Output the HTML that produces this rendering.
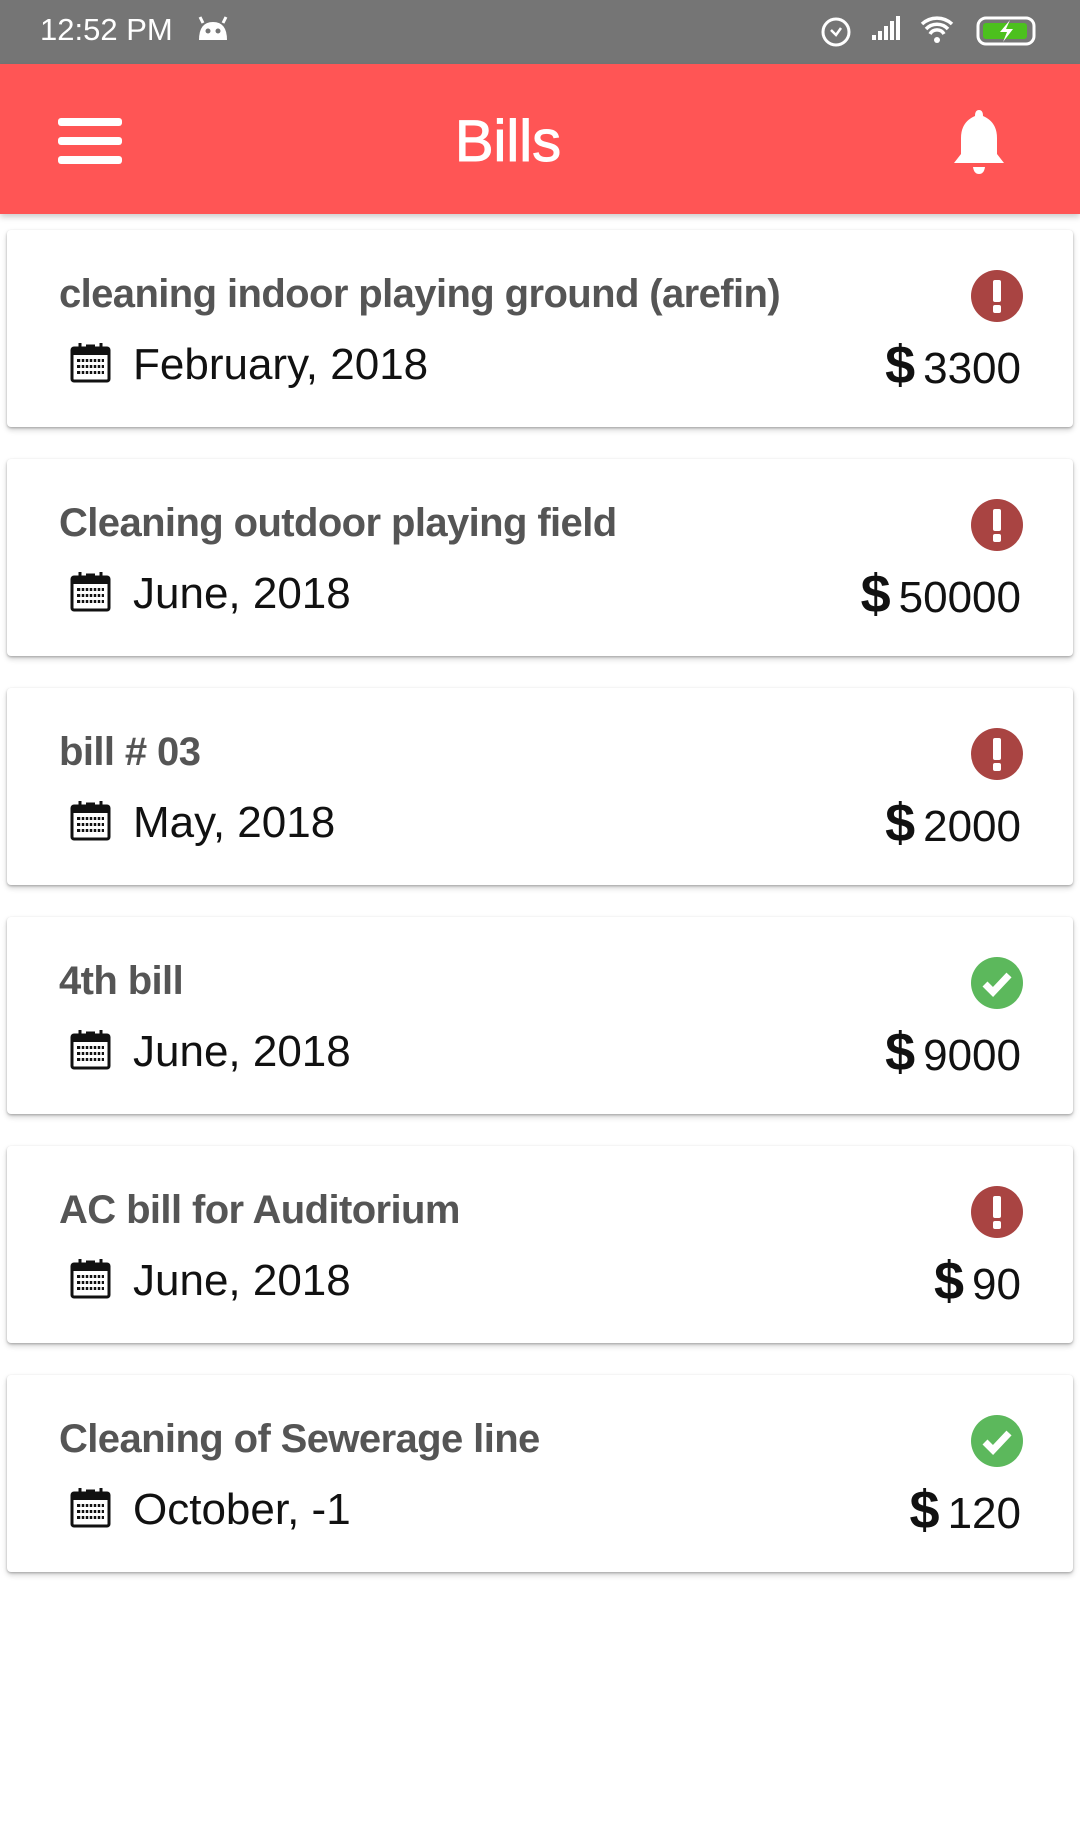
<!DOCTYPE html>
<html><head><meta charset="utf-8"><style>
*{margin:0;padding:0;box-sizing:border-box}
body{width:1080px;height:1840px;background:#fff;font-family:"Liberation Sans",sans-serif;position:relative;overflow:hidden}
.sb{position:absolute;left:0;top:0;width:1080px;height:64px;background:#757575;color:#fff}
.sb .t{position:absolute;left:40px;top:12px;font-size:31px}
.tb{position:absolute;left:0;top:64px;width:1080px;height:150px;background:#FF5555;box-shadow:0 3px 6px rgba(0,0,0,.2)}
.tb .h{position:absolute;left:508px;top:44px;width:0;text-align:center}
.tb .h span{position:absolute;left:-100px;width:200px;color:#fff;font-size:58px;text-align:center;-webkit-text-stroke:1px #fff}
.card{position:absolute;left:7px;width:1066px;height:197px;background:#fff;border-radius:4px;box-shadow:0 1px 2px rgba(0,0,0,.25),0 3px 6px rgba(0,0,0,.18)}
.ti{position:absolute;left:52px;top:42px;font-size:40px;font-weight:bold;color:#555;letter-spacing:-0.6px}
.cal{position:absolute;left:63px;top:112px}
.dt{position:absolute;left:126px;top:110px;font-size:44px;color:#111}
.amt{position:absolute;right:52px;top:104px;font-size:44px;color:#111;white-space:nowrap}
.amt b{font-size:54px;margin-right:8px}
.ic{position:absolute;left:964px;top:40px}
</style></head><body>
<div class="sb"><span class="t">12:52 PM</span>
<svg style="position:absolute;left:196px;top:14px" width="34" height="28" viewBox="0 0 34 28"><path d="M3 26 Q3 8 17 8 Q31 8 31 26Z" fill="#fff"/><path d="M7 9 L4 3 M27 9 L30 3" stroke="#fff" stroke-width="3"/><circle cx="12" cy="17" r="2.5" fill="#757575"/><circle cx="22" cy="17" r="2.5" fill="#757575"/></svg>
<svg style="position:absolute;left:818px;top:10px" width="226" height="40" viewBox="0 0 226 40"><circle cx="18" cy="22" r="13" fill="none" stroke="#fff" stroke-width="3"/><path d="M13 20 l5 5 5-7" fill="none" stroke="#fff" stroke-width="2.5"/><path d="M54 30h4v-5h-4z M60 30h4v-9h-4z M66 30h4v-14h-4z M72 30h4v-19h-4z M78 30h4v-24h-4z" fill="#fff"/><path d="M104 14 a22 22 0 0 1 30 0 M108 19 a15 15 0 0 1 22 0 M112 24 a8 8 0 0 1 14 0" fill="none" stroke="#fff" stroke-width="3.5"/><circle cx="119" cy="30" r="3" fill="#fff"/><rect x="160" y="8" width="56" height="26" rx="8" fill="none" stroke="#fff" stroke-width="3"/><rect x="165" y="13" width="44" height="16" rx="3" fill="#4CC01E"/><path d="M192 10 l-10 12 h7 l-4 10 10-13 h-7z" fill="#fff"/></svg>
</div>
<div class="tb">
<svg style="position:absolute;left:58px;top:54px" width="64" height="46"><rect x="0" y="0" width="64" height="8" rx="3" fill="#fff"/><rect x="0" y="19" width="64" height="8" rx="3" fill="#fff"/><rect x="0" y="38" width="64" height="8" rx="3" fill="#fff"/></svg>
<div class="h"><span>Bills</span></div>
<svg style="position:absolute;left:950px;top:46px" width="58" height="66" viewBox="0 0 58 66"><path d="M29 0 q4 0 4 6 q14 6 14 22 v16 l7 9 h-50 l7-9 v-16 q0-16 14-22 q0-6 4-6z" fill="#fff"/><path d="M23 57 h12 q-1 7 -6 7 q-5 0 -6-7z" fill="#fff"/></svg>
</div>

<div class="card" style="top:230px"><div class="ti">cleaning indoor playing ground (arefin)</div>
<svg class="cal" width="42" height="42" viewBox="0 0 42 42"><rect x="2" y="6" width="37" height="33" rx="2" fill="none" stroke="#111" stroke-width="3"/><rect x="2" y="6" width="37" height="7" fill="#111"/><path d="M10 1v9M31 1v9M16 4h9" stroke="#111" stroke-width="3"/><g fill="#111"><rect x="7" y="17" width="27" height="3"/><rect x="7" y="23" width="27" height="3"/><rect x="7" y="29" width="27" height="3"/></g><g stroke="#fff" stroke-width="1.5"><path d="M11 16v17M15 16v17M19 16v17M23 16v17M27 16v17M31 16v17"/></g></svg>
<div class="dt">February, 2018</div><div class="amt"><b>$</b>3300</div>
<svg class="ic" width="52" height="52"><circle cx="26" cy="26" r="26" fill="#A94442"/><rect x="22" y="10" width="8" height="22" rx="2" fill="#fff"/><rect x="22" y="35" width="8" height="8" rx="2" fill="#fff"/></svg></div>

<div class="card" style="top:459px"><div class="ti">Cleaning outdoor playing field</div>
<svg class="cal" width="42" height="42" viewBox="0 0 42 42"><rect x="2" y="6" width="37" height="33" rx="2" fill="none" stroke="#111" stroke-width="3"/><rect x="2" y="6" width="37" height="7" fill="#111"/><path d="M10 1v9M31 1v9M16 4h9" stroke="#111" stroke-width="3"/><g fill="#111"><rect x="7" y="17" width="27" height="3"/><rect x="7" y="23" width="27" height="3"/><rect x="7" y="29" width="27" height="3"/></g><g stroke="#fff" stroke-width="1.5"><path d="M11 16v17M15 16v17M19 16v17M23 16v17M27 16v17M31 16v17"/></g></svg>
<div class="dt">June, 2018</div><div class="amt"><b>$</b>50000</div>
<svg class="ic" width="52" height="52"><circle cx="26" cy="26" r="26" fill="#A94442"/><rect x="22" y="10" width="8" height="22" rx="2" fill="#fff"/><rect x="22" y="35" width="8" height="8" rx="2" fill="#fff"/></svg></div>

<div class="card" style="top:688px"><div class="ti">bill # 03</div>
<svg class="cal" width="42" height="42" viewBox="0 0 42 42"><rect x="2" y="6" width="37" height="33" rx="2" fill="none" stroke="#111" stroke-width="3"/><rect x="2" y="6" width="37" height="7" fill="#111"/><path d="M10 1v9M31 1v9M16 4h9" stroke="#111" stroke-width="3"/><g fill="#111"><rect x="7" y="17" width="27" height="3"/><rect x="7" y="23" width="27" height="3"/><rect x="7" y="29" width="27" height="3"/></g><g stroke="#fff" stroke-width="1.5"><path d="M11 16v17M15 16v17M19 16v17M23 16v17M27 16v17M31 16v17"/></g></svg>
<div class="dt">May, 2018</div><div class="amt"><b>$</b>2000</div>
<svg class="ic" width="52" height="52"><circle cx="26" cy="26" r="26" fill="#A94442"/><rect x="22" y="10" width="8" height="22" rx="2" fill="#fff"/><rect x="22" y="35" width="8" height="8" rx="2" fill="#fff"/></svg></div>

<div class="card" style="top:917px"><div class="ti">4th bill</div>
<svg class="cal" width="42" height="42" viewBox="0 0 42 42"><rect x="2" y="6" width="37" height="33" rx="2" fill="none" stroke="#111" stroke-width="3"/><rect x="2" y="6" width="37" height="7" fill="#111"/><path d="M10 1v9M31 1v9M16 4h9" stroke="#111" stroke-width="3"/><g fill="#111"><rect x="7" y="17" width="27" height="3"/><rect x="7" y="23" width="27" height="3"/><rect x="7" y="29" width="27" height="3"/></g><g stroke="#fff" stroke-width="1.5"><path d="M11 16v17M15 16v17M19 16v17M23 16v17M27 16v17M31 16v17"/></g></svg>
<div class="dt">June, 2018</div><div class="amt"><b>$</b>9000</div>
<svg class="ic" width="52" height="52"><circle cx="26" cy="26" r="26" fill="#5CB85C"/><path d="M14 27 l8 8 16-17" fill="none" stroke="#fff" stroke-width="7"/></svg></div>

<div class="card" style="top:1146px"><div class="ti">AC bill for Auditorium</div>
<svg class="cal" width="42" height="42" viewBox="0 0 42 42"><rect x="2" y="6" width="37" height="33" rx="2" fill="none" stroke="#111" stroke-width="3"/><rect x="2" y="6" width="37" height="7" fill="#111"/><path d="M10 1v9M31 1v9M16 4h9" stroke="#111" stroke-width="3"/><g fill="#111"><rect x="7" y="17" width="27" height="3"/><rect x="7" y="23" width="27" height="3"/><rect x="7" y="29" width="27" height="3"/></g><g stroke="#fff" stroke-width="1.5"><path d="M11 16v17M15 16v17M19 16v17M23 16v17M27 16v17M31 16v17"/></g></svg>
<div class="dt">June, 2018</div><div class="amt"><b>$</b>90</div>
<svg class="ic" width="52" height="52"><circle cx="26" cy="26" r="26" fill="#A94442"/><rect x="22" y="10" width="8" height="22" rx="2" fill="#fff"/><rect x="22" y="35" width="8" height="8" rx="2" fill="#fff"/></svg></div>

<div class="card" style="top:1375px"><div class="ti">Cleaning of Sewerage line</div>
<svg class="cal" width="42" height="42" viewBox="0 0 42 42"><rect x="2" y="6" width="37" height="33" rx="2" fill="none" stroke="#111" stroke-width="3"/><rect x="2" y="6" width="37" height="7" fill="#111"/><path d="M10 1v9M31 1v9M16 4h9" stroke="#111" stroke-width="3"/><g fill="#111"><rect x="7" y="17" width="27" height="3"/><rect x="7" y="23" width="27" height="3"/><rect x="7" y="29" width="27" height="3"/></g><g stroke="#fff" stroke-width="1.5"><path d="M11 16v17M15 16v17M19 16v17M23 16v17M27 16v17M31 16v17"/></g></svg>
<div class="dt">October, -1</div><div class="amt"><b>$</b>120</div>
<svg class="ic" width="52" height="52"><circle cx="26" cy="26" r="26" fill="#5CB85C"/><path d="M14 27 l8 8 16-17" fill="none" stroke="#fff" stroke-width="7"/></svg></div>
</body></html>
